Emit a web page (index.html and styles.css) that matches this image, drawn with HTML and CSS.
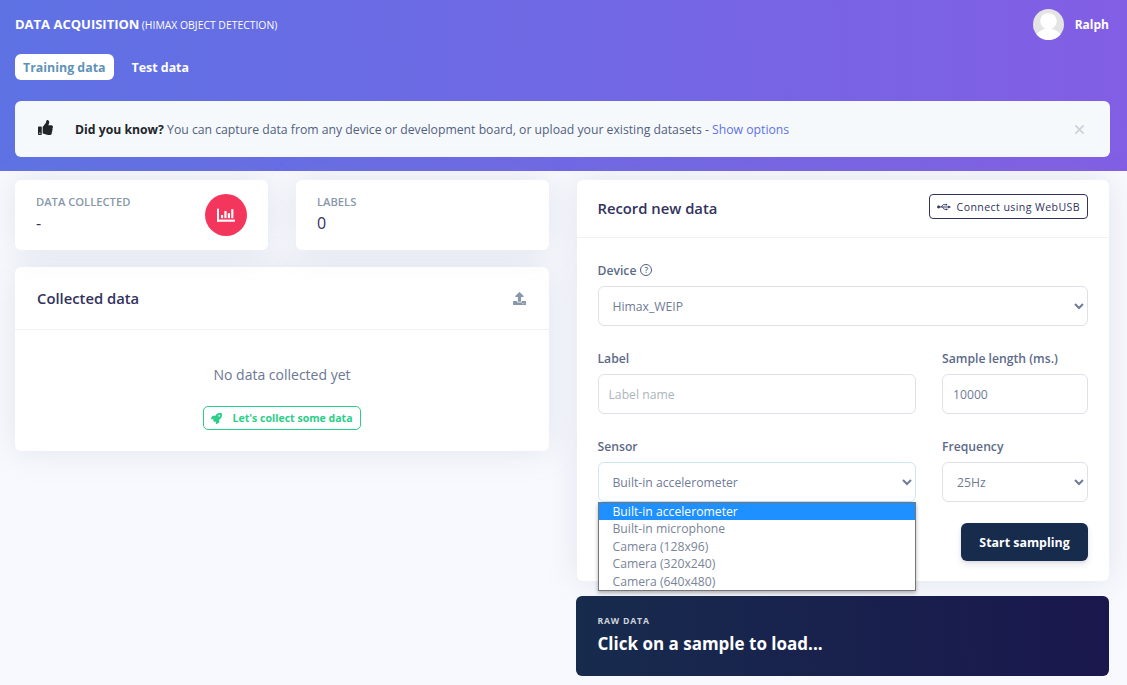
FILE: index.html
```html
<!DOCTYPE html>
<html lang="en">
<head>
  <meta charset="UTF-8">
  <title>Data acquisition</title>
  <link rel="stylesheet" href="styles.css">
</head>
<body>

  <header class="top">
    <div class="top-row">
      <div class="page-title">DATA ACQUISITION <small>(HIMAX OBJECT DETECTION)</small></div>
      <div class="user">
        <svg class="avatar" viewBox="0 0 32 32">
          <circle cx="16" cy="16" r="16" fill="#e4e4e4"/>
          <circle cx="16" cy="12.5" r="8.5" fill="#fff"/>
          <path d="M3.5 26c3-4 8-6 12.5-6s9.5 2 12.5 6a16 16 0 0 1-25 0z" fill="#fff"/>
        </svg>
        <span>Ralph</span>
      </div>
    </div>

    <nav class="tabs">
      <a class="tab active">Training data</a>
      <a class="tab">Test data</a>
    </nav>

    <div class="notice">
      <svg class="notice-icon" viewBox="0 0 512 512"><path fill="#212529" d="M104 224H24c-13.255 0-24 10.745-24 24v240c0 13.255 10.745 24 24 24h80c13.255 0 24-10.745 24-24V248c0-13.255-10.745-24-24-24zM64 472c-13.255 0-24-10.745-24-24s10.745-24 24-24 24 10.745 24 24-10.745 24-24 24zM384 81.452c0 42.416-25.97 66.208-33.277 94.548h101.723c33.397 0 59.397 27.746 59.553 58.098.084 17.938-7.546 37.249-19.439 49.197l-.11.11c9.836 23.337 8.237 56.037-9.308 79.469 8.681 25.895-.069 57.704-16.382 74.757 4.298 17.598 2.244 32.575-6.148 44.632C440.202 511.587 389.616 512 346.839 512l-2.845-.001c-48.287-.017-87.806-17.598-119.56-31.725-15.957-7.099-36.821-15.887-52.651-16.178-6.54-.12-11.783-5.457-11.783-11.998v-213.77c0-3.2 1.282-6.271 3.558-8.521 39.614-39.144 56.648-80.587 89.117-113.111 14.804-14.832 20.188-37.236 25.393-58.902C282.515 39.293 291.817 0 312 0c24 0 72 8 72 81.452z"/></svg>
      <p><strong>Did you know?</strong> You can capture data from any device or development board, or upload your existing datasets - <a class="link">Show options</a></p>
      <svg class="notice-close" viewBox="0 0 12 12"><path d="M1.500 1.500l9 9M10.500 1.500l-9 9" stroke="#cfd3da" stroke-width="2.200" fill="none"/></svg>
    </div>
  </header>

  <main class="content">
    <section class="col-left">
      <div class="stats">
        <div class="card stat">
          <div>
            <div class="stat-name">DATA COLLECTED</div>
            <div class="stat-value">-</div>
          </div>
          <div class="stat-badge">
            <svg viewBox="0 0 20 15" width="18" height="14">
              <rect x="0" y="0.500" width="2.200" height="14.500" fill="#fff"/>
              <rect x="0" y="12.600" width="20" height="2.400" fill="#fff"/>
              <rect x="4.400" y="7.500" width="2.400" height="3.500" fill="#fff"/>
              <rect x="8.200" y="3" width="2.400" height="8" fill="#fff"/>
              <rect x="12" y="5.500" width="2.400" height="5.500" fill="#fff"/>
              <rect x="15.800" y="1" width="2.400" height="10" fill="#fff"/>
            </svg>
          </div>
        </div>
        <div class="card stat">
          <div>
            <div class="stat-name">LABELS</div>
            <div class="stat-value">0</div>
          </div>
        </div>
      </div>

      <div class="card collected">
        <div class="card-head collected-head">
          <h3>Collected data</h3>
          <svg class="upload-icon" viewBox="0 0 512 512"><path fill="#8898aa" d="M296 384h-80c-13.3 0-24-10.7-24-24V192h-87.7c-17.8 0-26.7-21.5-14.1-34.1L242.3 5.7c7.5-7.5 19.8-7.5 27.3 0l152.2 152.2c12.6 12.6 3.7 34.1-14.1 34.1H320v168c0 13.3-10.7 24-24 24zm216-8v112c0 13.3-10.7 24-24 24H24c-13.3 0-24-10.7-24-24V376c0-13.3 10.7-24 24-24h136v8c0 30.9 25.1 56 56 56h80c30.9 0 56-25.1 56-56v-8h136c13.3 0 24 10.7 24 24zm-124 88c0-11-9-20-20-20s-20 9-20 20 9 20 20 20 20-9 20-20zm64 0c0-11-9-20-20-20s-20 9-20 20 9 20 20 20 20-9 20-20z"/></svg>
        </div>
        <div class="empty">
          <p>No data collected yet</p>
          <button class="btn-green">
            <svg viewBox="0 0 512 512" width="11" height="11"><path fill="#2dce89" d="M505.12 19.09c-1.19-5.53-6.66-11-12.21-12.18C460.72 0 435.51 0 410.41 0 307.18 0 245.27 55.2 199.05 128H94.84c-16.35.02-35.56 11.88-42.89 26.48L2.52 253.3A28.4 28.4 0 0 0 0 264a24 24 0 0 0 24 24h103.81l-22.47 22.47c-11.37 11.36-13 32.26 0 45.25l50.9 50.9c11.16 11.19 32.16 13.16 45.28 0L224 384.16V488a24 24 0 0 0 24 24 28.56 28.56 0 0 0 10.71-2.52l98.73-49.39c14.63-7.3 26.51-26.5 26.51-42.86V312.8c72.6-46.31 128.03-108.41 128.03-211.1.1-25.2.1-50.4-6.86-82.61zM384.04 168a40 40 0 1 1 40-40 40.02 40.02 0 0 1-40 40z"/></svg>
            Let's collect some data
          </button>
        </div>
      </div>
    </section>

    <section class="col-right">
      <div class="card record">
        <div class="card-head record-head">
          <h3>Record new data</h3>
          <button class="btn-usb">
            <svg viewBox="0 0 18 10" width="14" height="8"><path d="M1 5h15M5 5l3-3h3M7 5l2.500 3h2" stroke="#32325d" stroke-width="1.200" fill="none"/><circle cx="2" cy="5" r="1.800" fill="#32325d"/><path d="M14.500 3l3.500 2-3.500 2z" fill="#32325d"/><rect x="11" y="1" width="2" height="2" fill="#32325d"/><circle cx="12.500" cy="8" r="1.100" fill="#32325d"/></svg>
            Connect using WebUSB
          </button>
        </div>

        <div class="form">
          <div class="field">
            <label>Device <span class="help">?</span></label>
            <select class="control"><option>Himax_WEIP</option></select>
          </div>

          <div class="form-row">
            <div class="field">
              <label>Label</label>
              <input class="control" type="text" placeholder="Label name">
            </div>
            <div class="field">
              <label>Sample length (ms.)</label>
              <input class="control" type="text" value="10000">
            </div>
          </div>

          <div class="form-row">
            <div class="field">
              <label>Sensor</label>
              <select class="control focused"><option>Built-in accelerometer</option></select>
              <ul class="dropdown">
                <li class="selected">Built-in accelerometer</li>
                <li>Built-in microphone</li>
                <li>Camera (128x96)</li>
                <li>Camera (320x240)</li>
                <li>Camera (640x480)</li>
              </ul>
            </div>
            <div class="field">
              <label>Frequency</label>
              <select class="control"><option>25Hz</option></select>
            </div>
          </div>

          <div class="form-actions">
            <button class="btn-dark">Start sampling</button>
          </div>
        </div>
      </div>

      <div class="raw">
        <div class="raw-name">RAW DATA</div>
        <div class="raw-text">Click on a sample to load...</div>
      </div>
    </section>
  </main>

</body>
</html>
```

FILE: styles.css
```css
* {
  box-sizing: border-box;
}

body {
  margin: 0;
  font-family: 'Open Sans', sans-serif;
  background-color: #f8f9fe;
  color: #525f7f;
}

.top {
  height: 171px;
  padding: 14px 18px 0 15px;
  background: linear-gradient(87deg, #5e72e4, #825ee4);
  color: white;
}

.top-row {
  display: flex;
  justify-content: space-between;
  align-items: center;
  height: 20px;
}

.page-title {
  font-size: 13px;
  font-weight: 700;
}

.page-title small {
  margin-left: -1px;
  font-size: 10.4px;
  font-weight: 400;
}

.user {
  display: flex;
  align-items: center;
  gap: 11px;
  font-size: 12px;
  font-weight: 700;
}

.avatar {
  width: 31px;
  height: 31px;
}

.tabs {
  display: flex;
  gap: 10px;
  margin-top: 20px;
}

.tab {
  height: 26px;
  padding: 0 8px;
  line-height: 27px;
  font-size: 12.4px;
  font-weight: 700;
  border-radius: 6px;
}

.tab.active {
  background-color: white;
  color: #5e93b8;
}

.notice {
  display: flex;
  align-items: center;
  height: 56px;
  margin: 21px -1px 0 0;
  padding: 0 25px 0 23px;
  background-color: #f6f9fc;
  border-radius: 6px;
  color: #525f7f;
}

.notice-icon {
  width: 15px;
  height: 15px;
  margin-top: -3px;
}

.notice p {
  flex: 1;
  margin: 0 0 0 22px;
  font-size: 12.23px;
}

.notice strong {
  color: #212529;
  font-weight: 700;
}

.link {
  color: #5e72e4;
}

.notice-close {
  width: 11px;
  height: 11px;
}

.content {
  display: flex;
  gap: 27.5px;
  padding: 9px 18px 0 15px;
}

.col-left {
  width: 534px;
}

.col-right {
  width: 532.5px;
}

.card {
  background-color: white;
  border-radius: 6px;
  box-shadow: 0 0 32px 0 rgba(136, 152, 170, 0.2);
}

.stats {
  display: flex;
  gap: 28px;
}

.stat {
  flex: 1;
  display: flex;
  justify-content: space-between;
  height: 70px;
  padding: 14px 21px 0 21px;
}

.stat-name {
  font-size: 11.2px;
  font-weight: 600;
  color: #8898aa;
  line-height: 15px;
}

.stat-value {
  margin-top: 4px;
  font-size: 16px;
  font-weight: 500;
  color: #32325d;
  line-height: 21px;
}

.stat-badge {
  display: flex;
  align-items: center;
  justify-content: center;
  width: 42px;
  height: 42px;
  border-radius: 50%;
  background-color: #f5365c;
}

.card-head {
  display: flex;
  justify-content: space-between;
  align-items: center;
  border-bottom: 1px solid rgba(0, 0, 0, 0.05);
}

.card-head h3 {
  margin: 0;
  font-size: 14.8px;
  font-weight: 600;
  color: #32325d;
}

.collected {
  height: 184px;
  margin-top: 17px;
}

.collected-head {
  height: 63px;
  padding: 0 23px 0 22px;
}

.upload-icon {
  width: 13px;
  height: 13px;
}

.empty {
  display: flex;
  flex-direction: column;
  align-items: center;
}

.empty p {
  margin: 35px 0 0 0;
  font-size: 14px;
  line-height: 20px;
  color: #6b7794;
}

.btn-green {
  display: flex;
  align-items: center;
  gap: 10px;
  height: 24px;
  margin-top: 21px;
  padding: 0 7px;
  background-color: white;
  border: 1px solid #2dce89;
  border-radius: 5px;
  color: #2dce89;
  font-family: inherit;
  font-size: 10.55px;
  font-weight: 700;
}

.record {
  height: 401px;
}

.record-head {
  height: 58px;
  padding: 0 21px 2px 21px;
}

.record-head .btn-usb {
  margin-top: -2px;
}

.btn-usb {
  display: flex;
  align-items: center;
  gap: 6px;
  height: 25px;
  padding: 0 7px;
  background-color: white;
  border: 1px solid #32325d;
  border-radius: 4px;
  color: #32325d;
  font-family: inherit;
  font-size: 10.6px;
  font-weight: 500;
  letter-spacing: 0.4px;
}

.form {
  padding: 24px 21px 0 21px;
}

.form-row {
  display: grid;
  grid-template-columns: 1fr 146px;
  gap: 26px;
  margin-top: 24px;
}

.field {
  position: relative;
}

.field label {
  display: flex;
  align-items: center;
  gap: 4px;
  height: 16px;
  margin-bottom: 8px;
  font-size: 12.2px;
  font-weight: 600;
  color: #5c6a8a;
}

.help {
  display: inline-block;
  width: 12px;
  height: 12px;
  border: 1px solid #525f7f;
  border-radius: 50%;
  font-size: 8px;
  line-height: 10px;
  text-align: center;
}

.control {
  display: block;
  width: 100%;
  height: 40px;
  padding: 0 10px;
  background-color: white;
  border: 1px solid #dee2e6;
  border-radius: 6px;
  font-family: inherit;
  font-size: 12.2px;
  color: #707b96;
}

.control::placeholder {
  color: #adb5bd;
}

.control.focused {
  border-color: #cde6f5;
}

.dropdown {
  position: absolute;
  left: 0;
  top: 64px;
  width: 318.5px;
  height: 89px;
  margin: 0;
  padding: 0;
  list-style: none;
  background-color: white;
  border: 1px solid #767676;
  box-shadow: 0 2px 4px rgba(0, 0, 0, 0.3);
  font-size: 12.2px;
  color: #7a8599;
  z-index: 5;
}

.dropdown li {
  height: 17.4px;
  line-height: 17.4px;
  padding-left: 14px;
}

.dropdown li.selected {
  background-color: #1e90ff;
  color: white;
}

.form-actions {
  display: flex;
  justify-content: flex-end;
  margin-top: 21px;
}

.btn-dark {
  width: 127px;
  height: 38px;
  background-color: #172b4d;
  border: none;
  border-radius: 6px;
  box-shadow: 0 4px 6px rgba(50, 50, 93, 0.11), 0 1px 3px rgba(0, 0, 0, 0.08);
  color: white;
  font-family: inherit;
  font-size: 12.4px;
  font-weight: 700;
}

.raw {
  width: 533.5px;
  height: 80px;
  margin: 15px 0 0 -1px;
  padding: 19px 22px 0 22px;
  background: linear-gradient(87deg, #172b4d, #1a174d);
  border-radius: 6px;
  color: white;
}

.raw-name {
  font-size: 8.7px;
  font-weight: 700;
  letter-spacing: 0.8px;
  color: #ced4da;
  line-height: 13px;
}

.raw-text {
  margin-top: 4px;
  font-size: 17px;
  font-weight: 700;
  line-height: 24px;
}
```
